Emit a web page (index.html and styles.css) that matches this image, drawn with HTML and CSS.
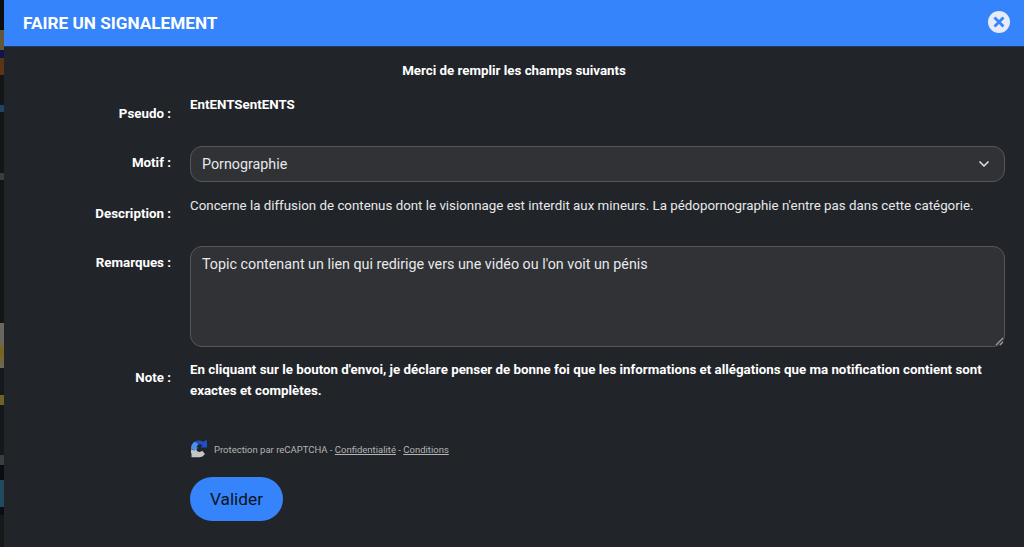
FILE: index.html
```html
<!DOCTYPE html>
<html lang="fr">
<head>
<meta charset="utf-8">
<title>Faire un signalement</title>
<link rel="stylesheet" href="styles.css">
</head>
<body>
<div class="page">
  <div class="backdrop">
    <i class="b b1"></i><i class="b b2"></i><i class="b b3"></i><i class="b b4"></i><i class="b b5"></i><i class="b b6"></i><i class="b b7"></i><i class="b b8"></i><i class="b b9"></i><i class="b b10"></i><i class="b b11"></i><i class="b b12"></i><i class="b b13"></i><i class="b b14"></i><i class="b b15"></i><i class="b b16"></i><i class="b b17"></i><i class="b b18"></i>
  </div>
  <main class="modal">
    <header class="head">
      <h1 class="title">FAIRE UN SIGNALEMENT</h1>
      <svg class="close" width="22" height="22" viewBox="0 0 22 22"><circle cx="11" cy="11" r="11" fill="#e6ebf7"/><path d="M6.500 6.500l9 9M15.500 6.500l-9 9" stroke="#3584fb" stroke-width="2.800" fill="none"/></svg>
    </header>
    <div class="body">
      <p class="intro">Merci de remplir les champs suivants</p>
      <div class="row r-pseudo">
        <div class="label l-pseudo">Pseudo :</div>
        <div class="pseudo">EntENTSentENTS</div>
      </div>
      <div class="row r-motif">
        <div class="label l-motif">Motif :</div>
        <div class="select">
          <span>Pornographie</span>
          <svg width="12" height="8" viewBox="0 0 12 8"><path d="M1.500 1.500l4.500 4.500 4.500-4.500" stroke="#e4e5e7" stroke-width="1.500" fill="none"/></svg>
        </div>
      </div>
      <div class="row r-desc">
        <div class="label l-desc">Description :</div>
        <div class="desc">Concerne la diffusion de contenus dont le visionnage est interdit aux mineurs. La pédopornographie n'entre pas dans cette catégorie.</div>
      </div>
      <div class="row r-rem">
        <div class="label l-rem">Remarques :</div>
        <div class="area">Topic contenant un lien qui redirige vers une vidéo ou l'on voit un pénis
          <svg class="grip" width="9" height="9" viewBox="0 0 9 9"><path d="M1 8L8 1M5 8l3-3" stroke="#9a9b9e" stroke-width="1.300" fill="none"/></svg>
        </div>
      </div>
      <div class="row r-note">
        <div class="label l-note">Note :</div>
        <div class="note">En cliquant sur le bouton d'envoi, je déclare penser de bonne foi que les informations et allégations que ma notification contient sont exactes et complètes.</div>
      </div>
      <div class="captcha">
        <svg width="18" height="18" viewBox="0 0 18 18"><path d="M5 1.500C6.500.6 8 .3 9.500.5c1.500.2 2.700.8 3.500 1.500L15 .5l2 0V7.500H10.500l2-2C11.500 4.500 10 4 8.500 4.500z" fill="#1f50c8"/><path d="M1 9C.8 5.500 2.500 3 5 1.500L8.500 4.500C7.500 5 6.800 6 6.500 7.500H8.500L5 10.500 1 9z" fill="#4a90ee"/><path d="M1 9.500l3.500 1 1.500-1.500c.5 2 2 3 3.500 3 1.200 0 2-.5 2.700-1.200L15 14c-1.500 2-3.500 3.300-6 3.300H1.500V13.500L1 13z" fill="#c4c5c7"/></svg>
        <span>Protection par reCAPTCHA - <a>Confidentialité</a> - <a>Conditions</a></span>
      </div>
      <button class="submit" type="button">Valider</button>
    </div>
  </main>
</div>
</body>
</html>
```
FILE: styles.css
```css
* { box-sizing: border-box; }
html, body { margin: 0; height: 100%; }
body { background: #141516; font-family: Roboto, "Liberation Sans", sans-serif; overflow: hidden; }
.page { display: flex; height: 547px; }
.backdrop { width: 4px; flex: none; display: flex; flex-direction: column; }
.b { display: block; flex: none; }
.b1 { height: 30px; background: #0e0f10; }
.b2 { height: 20px; background: #645639; }
.b3 { height: 8px; background: #10144a; }
.b4 { height: 17px; background: #5a3319; }
.b5 { height: 30px; background: #141516; }
.b6 { height: 7px; background: #1d4468; }
.b7 { height: 61px; background: #141516; }
.b8 { height: 7px; background: #3a3c40; }
.b9 { height: 143px; background: #141516; }
.b10 { height: 45px; background: linear-gradient(#6a675f, #6a675f 40%, #7a6418 65%, #6a675f); }
.b11 { height: 27px; background: #15181c; }
.b12 { height: 10px; background: #6f6028; }
.b13 { height: 50px; background: #15171a; }
.b14 { height: 10px; background: #3a3c40; }
.b15 { height: 15px; background: #0a0e14; }
.b16 { height: 27px; background: #1f4a60; }
.b17 { height: 8px; background: #0a0e14; }
.b18 { height: 32px; background: #17181a; }
.modal { flex: 1; min-width: 0; background: #212429; color: #fff; }
.head { height: 47px; background: #3584fb; border-bottom: 1px solid #1d3a66; display: flex; align-items: center; justify-content: space-between; padding: 0 14px 1px 19px; }
.title { margin: 0; font-size: 17.2px; font-weight: 700; line-height: 20px; color: #fff; }
.close { flex: none; margin-top: -1px; }
.body { padding-top: 16px; }
.intro { margin: 0; height: 16px; text-align: center; font-size: 13.33px; font-weight: 700; line-height: 16px; }
.row { display: flex; gap: 19px; font-size: 13.33px; }
.label { width: 167px; flex: none; text-align: right; font-weight: 700; font-size: 13.33px; line-height: 16px; }
.r-pseudo { margin-top: 18px; height: 49px; }
.l-pseudo { padding-top: 9px; }
.pseudo { font-weight: 700; line-height: 16px; }
.r-motif { height: 35px; }
.l-motif { padding-top: 9px; }
.select { width: 815px; height: 36px; display: flex; align-items: center; justify-content: space-between; padding: 0 14px 0 11px; background: #303236; border: 1px solid #55575b; border-radius: 12px; font-size: 14.3px; color: #e8e9ea; }
.r-desc { margin-top: 16px; height: 49px; }
.l-desc { padding-top: 9px; }
.desc { padding-top: 1px; line-height: 16px; color: #e8e9ea; }
.r-rem { height: 101px; }
.l-rem { padding-top: 9px; }
.area { position: relative; width: 815px; height: 101px; padding: 8px 11px; background: #303236; border: 1px solid #55575b; border-radius: 12px; font-size: 14.3px; line-height: 18px; color: #e8e9ea; }
.grip { position: absolute; right: 0; bottom: 0; }
.r-note { margin-top: 12px; }
.l-note { padding-top: 11px; }
.note { width: 815px; font-weight: 700; line-height: 21px; }
.captcha { display: flex; align-items: center; gap: 6px; margin: 39px 0 0 186px; height: 18px; font-size: 9.5px; color: #b4b5b7; }
.captcha a { text-decoration: underline; }
.submit { display: block; margin: 19px 0 0 186px; width: 93px; height: 44px; border: 0; border-radius: 22px; background: #3584fb; color: #0c1420; font: 400 17.3px Roboto, sans-serif; }
```
